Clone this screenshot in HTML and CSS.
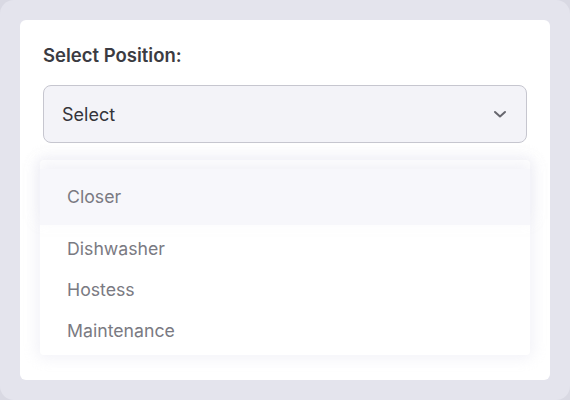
FILE: index.html
```html
<!DOCTYPE html>
<html>
<head>
<meta charset="utf-8">
<link rel="stylesheet" href="styles.css">
</head>
<body>
<div class="frame">
  <div class="card">
    <div class="label">Select Position:</div>
    <div class="select">
      <span class="value">Select</span>
      <svg class="chev" width="14" height="9" viewBox="0 0 14 9"><path d="M2 2 L7 6.5 L12 2" fill="none" stroke="#66666e" stroke-width="2" stroke-linecap="round" stroke-linejoin="round"/></svg>
    </div>
    <ul class="list">
      <li class="item active">Closer</li>
      <li class="item">Dishwasher</li>
      <li class="item">Hostess</li>
      <li class="item">Maintenance</li>
    </ul>
  </div>
</div>
</body>
</html>
```
FILE: styles.css
```css
html, body { margin: 0; padding: 0; background: #d9d9e3; }
body { width: 570px; height: 400px; overflow: hidden; font-family: Inter, "Noto Sans", sans-serif; }
.frame {
  width: 570px; height: 400px; box-sizing: border-box;
  background: #e4e4ed; border-radius: 14px; padding: 20px;
}
.card {
  background: #ffffff; border-radius: 6px; height: 360px;
  box-sizing: border-box; padding: 23px 23px 0 23px;
}
.label {
  font-size: 18.5px; font-weight: 600; color: #3b3b42; line-height: 24px;
  margin-bottom: 18px;
}
.select {
  height: 58px; box-sizing: border-box; background: #f3f3f8;
  border: 1px solid #c6c6cf; border-radius: 8px;
  display: flex; align-items: center; justify-content: space-between;
  padding: 0 19px 0 18px;
}
.value { font-size: 18px; color: #34343a; }
.chev { display: block; }
.list {
  list-style: none; margin: 17px -3px 0 -3px; padding: 9px 0 4px 0;
  background: #fff; box-shadow: 0 0 14px 4px rgba(228, 228, 240, 0.45);
  border-radius: 4px;
}
.item {
  font-size: 17.7px; color: #7a7a82; height: 41px; line-height: 41px;
  padding-left: 27px;
}
.item.active {
  height: 56px; line-height: 56px; background: #f7f7fb; margin-bottom: 3px;
  box-shadow: 0 -6px 12px rgba(232, 232, 242, 0.5);
}
```
